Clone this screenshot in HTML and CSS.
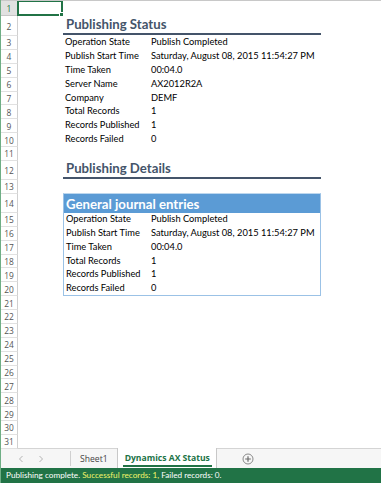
FILE: index.html
```html
<!DOCTYPE html>
<html>
<head>
<meta charset="utf-8">
<link rel="stylesheet" href="styles.css">
</head>
<body>
<div class="app">
  <div class="sheet">
    <div class="rh rh-sel">1</div>
    <div class="rh">2</div>
    <div class="rh">3</div>
    <div class="rh">4</div>
    <div class="rh">5</div>
    <div class="rh">6</div>
    <div class="rh">7</div>
    <div class="rh">8</div>
    <div class="rh">9</div>
    <div class="rh">10</div>
    <div class="rh">11</div>
    <div class="rh">12</div>
    <div class="rh">13</div>
    <div class="rh">14</div>
    <div class="rh">15</div>
    <div class="rh">16</div>
    <div class="rh">17</div>
    <div class="rh">18</div>
    <div class="rh">19</div>
    <div class="rh">20</div>
    <div class="rh">21</div>
    <div class="rh">22</div>
    <div class="rh">23</div>
    <div class="rh">24</div>
    <div class="rh">25</div>
    <div class="rh">26</div>
    <div class="rh">27</div>
    <div class="rh">28</div>
    <div class="rh">29</div>
    <div class="rh">30</div>
    <div class="rh">31</div>

    <div class="active-cell"><span class="fill-handle"></span></div>

    <div class="status-block">
      <div class="title"><span>Publishing Status</span></div>
      <div class="kv"><span class="k">Operation State</span><span class="v">Publish Completed</span></div>
      <div class="kv"><span class="k">Publish Start Time</span><span class="v">Saturday, August 08, 2015 11:54:27 PM</span></div>
      <div class="kv"><span class="k">Time Taken</span><span class="v">00:04.0</span></div>
      <div class="kv"><span class="k">Server Name</span><span class="v">AX2012R2A</span></div>
      <div class="kv"><span class="k">Company</span><span class="v">DEMF</span></div>
      <div class="kv"><span class="k">Total Records</span><span class="v">1</span></div>
      <div class="kv"><span class="k">Records Published</span><span class="v">1</span></div>
      <div class="kv"><span class="k">Records Failed</span><span class="v">0</span></div>
    </div>

    <div class="details-title title"><span>Publishing Details</span></div>

    <div class="entity-table">
      <div class="entity-head"><span>General journal entries</span></div>
      <div class="kv"><span class="k">Operation State</span><span class="v">Publish Completed</span></div>
      <div class="kv"><span class="k">Publish Start Time</span><span class="v">Saturday, August 08, 2015 11:54:27 PM</span></div>
      <div class="kv"><span class="k">Time Taken</span><span class="v">00:04.0</span></div>
      <div class="kv"><span class="k">Total Records</span><span class="v">1</span></div>
      <div class="kv"><span class="k">Records Published</span><span class="v">1</span></div>
      <div class="kv"><span class="k">Records Failed</span><span class="v">0</span></div>
    </div>
  </div>

  <div class="tabbar">
    <div class="nav">
      <svg width="6" height="8" viewBox="0 0 6 8"><path d="M4.5 1 L1.5 4 L4.5 7" fill="none" stroke="#b4b4b4" stroke-width="1"/></svg>
      <svg width="6" height="8" viewBox="0 0 6 8"><path d="M1.5 1 L4.5 4 L1.5 7" fill="none" stroke="#b4b4b4" stroke-width="1"/></svg>
    </div>
    <div class="tab">Sheet1</div>
    <div class="tab tab-active"><span>Dynamics AX Status</span></div>
    <div class="add-sheet">
      <svg width="12" height="12" viewBox="0 0 12 12"><circle cx="6" cy="6" r="5" fill="none" stroke="#8a8a8a" stroke-width="1"/><path d="M6 3.2 V8.8 M3.2 6 H8.8" stroke="#6a6a6a" stroke-width="1.2"/></svg>
    </div>
  </div>

  <div class="statusbar">Publishing complete. <span class="ok">Successful records: 1,</span> Failed records: 0.</div>
</div>
</body>
</html>
```

FILE: styles.css
```css
* { box-sizing: border-box; }

html, body {
  margin: 0;
  padding: 0;
  background: #ffffff;
}

body {
  width: 381px;
  height: 483px;
  overflow: hidden;
}

.app {
  height: 483px;
  display: flex;
  flex-direction: column;
  border-left: 1px solid #6fae85;
}

.sheet {
  position: relative;
  display: grid;
  grid-template-columns: 17px 45px 86px 172px 1fr;
  grid-template-rows: 15px 20px repeat(9, 13.88px) 19px 14px 19px repeat(17, 13.88px);
  border-top: 1px solid #c8c8c8;
  height: 448px;
  font-family: Lato, "Liberation Sans", sans-serif;
  font-size: 9.3px;
  color: #000;
}

.rh {
  grid-column: 1;
  display: flex;
  align-items: center;
  justify-content: center;
  font-family: "Open Sans", "Liberation Sans", sans-serif;
  font-size: 8.4px;
  color: #555555;
  background: #ffffff;
  border-right: 1px solid #d0d0d0;
  border-bottom: 1px solid #e1e1e1;
  padding-top: 1px;
}

.rh-sel {
  background: #e1e1e1;
  color: #217346;
  border-bottom-color: #c6c6c6;
}

.active-cell {
  grid-column: 2;
  grid-row: 1;
  position: relative;
  border: 2px solid #217346;
  border-top-width: 1px;
  margin-left: -1px;
}

.fill-handle {
  position: absolute;
  right: -3px;
  bottom: -3px;
  width: 5px;
  height: 5px;
  background: #217346;
  border: 1px solid #ffffff;
}

.status-block {
  grid-column: 3 / 5;
  grid-row: 2 / 11;
  display: grid;
  grid-template-rows: 20px repeat(8, 13.88px);
}

.title {
  display: flex;
  align-items: flex-end;
  border-bottom: 2px solid #44546a;
  margin-bottom: 1px;
  padding-left: 3px;
  padding-bottom: 1px;
  font-weight: bold;
  font-size: 13.2px;
  color: #44546a;
  line-height: 16px;
}

.details-title {
  grid-column: 3 / 5;
  grid-row: 12;
}

.kv {
  display: grid;
  grid-template-columns: 86px 172px;
  align-items: end;
  line-height: 12px;
  padding-bottom: 2.5px;
  white-space: nowrap;
}

.k, .v {
  padding-left: 2px;
}

.entity-table {
  grid-column: 3 / 5;
  grid-row: 14 / 21;
  display: grid;
  grid-template-rows: 19px repeat(6, 13.88px);
  border: 1px solid #9bc2e6;
  border-top-color: #bdd7ee;
  margin-top: -1px;
}

.entity-table .kv {
  grid-template-columns: 85px 171px;
}

.entity-head {
  background: #5b9bd5;
  color: #ffffff;
  font-weight: bold;
  font-size: 13.2px;
  display: flex;
  align-items: flex-end;
  padding-left: 2px;
  padding-bottom: 1px;
  line-height: 16px;
}

.tabbar {
  height: 20px;
  display: flex;
  align-items: stretch;
  background: #f6f6f6;
  border-top: 1px solid #d4d4d4;
  font-family: "Open Sans", "Liberation Sans", sans-serif;
  font-size: 8.6px;
}

.nav {
  width: 70px;
  display: flex;
  align-items: center;
  gap: 14px;
  padding-left: 17px;
  border-right: 1px solid #d0d0d0;
  margin: 2px 0;
}

.tab {
  display: flex;
  align-items: center;
  padding: 0 9px;
  color: #444444;
}

.tab-active {
  background: #ffffff;
  color: #217346;
  font-weight: bold;
  border-left: 1px solid #c8c8c8;
  border-right: 1px solid #c8c8c8;
  margin-top: -1px;
  padding: 0 4px 0 5px;
}

.tab-active span {
  border-bottom: 2px solid #217346;
  padding: 3px 2px 1px 2px;
}

.add-sheet {
  display: flex;
  align-items: center;
  padding-left: 25px;
}

.statusbar {
  height: 15px;
  background: #217346;
  color: #ffffff;
  font-family: Lato, "Liberation Sans", sans-serif;
  font-size: 8.2px;
  line-height: 15px;
  padding-left: 5px;
  white-space: nowrap;
}

.ok {
  color: #f3f36a;
}
```
